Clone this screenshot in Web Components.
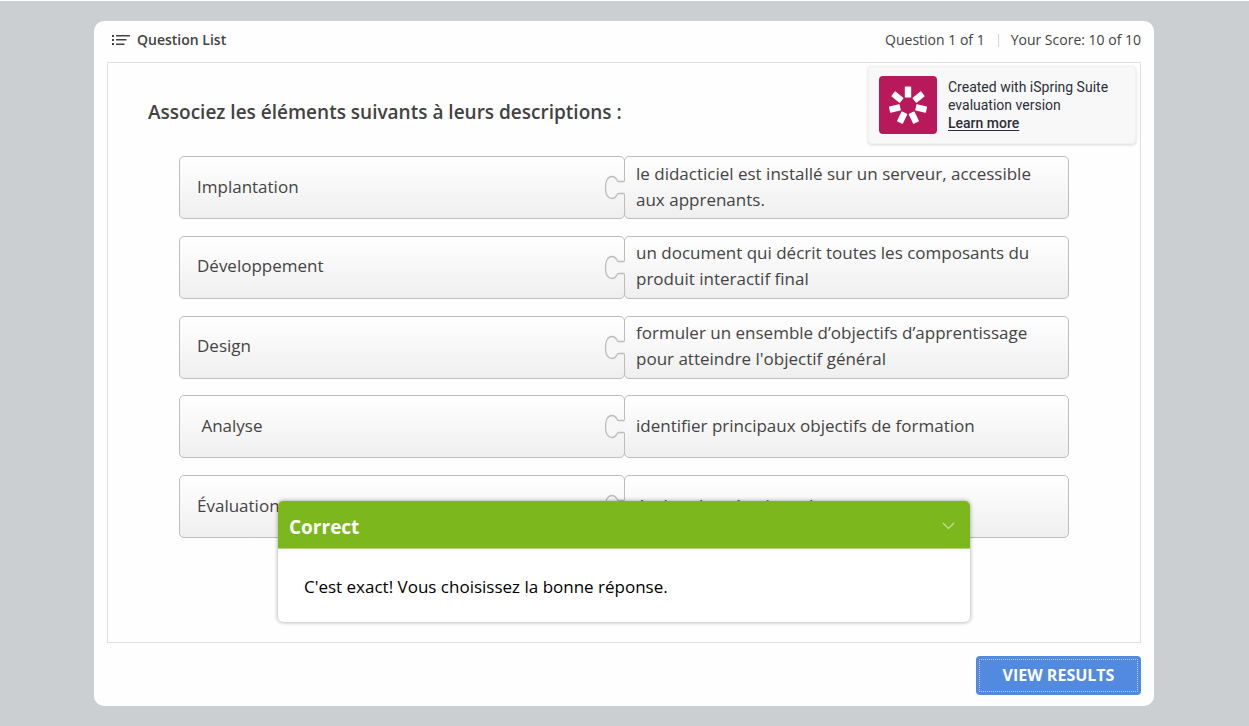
<!DOCTYPE html>
<html lang="fr">
<head>
<meta charset="utf-8">
<title>Question List</title>
<style>
html { height: 100%; }
body { margin: 0; min-height: 100%; box-sizing: border-box; display: flex; padding-right: 1px; background: #cbcfd2; border-top: 1px solid #fff; font-family: "Open Sans", "Noto Sans", sans-serif; color: #424242; }
</style>
</head>
<body>
<quiz-player></quiz-player>
<script>
const define = (name, html, setup) => {
  const template = document.createElement('template');
  template.innerHTML = html;
  customElements.define(name, class extends HTMLElement {
    constructor() {
      super();
      this.attachShadow({ mode: 'open' }).append(template.content.cloneNode(true));
      if (setup) setup(this);
    }
  });
};

define('quiz-topbar', `
<style>
:host { display: flex; align-items: center; justify-content: space-between; height: 38px; padding-left: 5px; font-size: 14px; line-height: 20px; }
button { display: flex; align-items: center; gap: 7px; padding: 0; border: 0; background: none; font: 600 14px/20px "Open Sans", sans-serif; color: #424242; }
.status { display: flex; align-items: center; }
.score { margin-left: 13px; padding-left: 13px; position: relative; }
.score::before { content: ""; position: absolute; left: 0; top: 4px; height: 13px; border-left: 1px solid #d4d4d4; }
</style>
<button type="button">
  <svg width="18" height="12" viewBox="0 0 18 12" fill="#424242"><path d="M0 1h2v2H0zM4 1h14v1.500H4zM0 5h2v2H0zM4 5h10.500v1.500H4zM0 9h2v2H0zM4 9.500h8.500V11H4z"/></svg>
  <span>Question List</span>
</button>
<div class="status"><span>Question 1 of 1</span><span class="score">Your Score: 10 of 10</span></div>
`);

define('trial-badge', `
<style>
:host { display: flex; gap: 11px; box-sizing: border-box; width: 268px; padding: 9px 10px 9px; border: 1px solid #f1f1f1; border-radius: 4px; background: #f8f8f8; box-shadow: 0 1px 3px rgba(0,0,0,.15); font: 14px/18px Roboto, sans-serif; color: #2c2f38; }
svg { flex: none; }
p { margin: 2px 0 0; white-space: nowrap; }
a { color: inherit; font-weight: 500; text-underline-offset: 2px; }
</style>
<svg width="58" height="58" viewBox="0 0 58 58"><rect width="58" height="58" rx="4" fill="#b8195b"/><g id="rays" fill="#fff" transform="translate(29 29.500)"></g></svg>
<p>Created with iSpring Suite<br>evaluation version<br><a href="#learn">Learn more</a></p>
`, host => {
  const rays = host.shadowRoot.querySelector('#rays');
  for (let i = 0; i < 7; i++) {
    const r = document.createElementNS('http://www.w3.org/2000/svg', 'rect');
    for (const [k, v] of Object.entries({ x: -3.2, y: -19, width: 6.4, height: 11, rx: 0.6, transform: `rotate(${i * 360 / 7})` })) r.setAttribute(k, v);
    rays.append(r);
  }
});

define('match-pair', `
<style>
:host { display: grid; grid-template-columns: 1fr 1fr; height: 63px; font-size: 17px; line-height: 26px; color: #444; }
div { position: relative; box-sizing: border-box; display: flex; align-items: center; border: 1px solid #bdbdbd; border-radius: 5px; background: linear-gradient(#fff, #efefef); }
.term { padding: 0 0 2px 17px; margin-right: -1px; white-space: pre; }
.answer { padding: 0 16px 2px 11px; }
svg { position: absolute; left: -21px; top: 18px; }
</style>
<div class="term"><slot name="term"></slot></div>
<div class="answer">
  <svg width="22" height="25" viewBox="0 0 22 25"><path d="M20 6v13h2V6z" fill="#f7f7f7"/><path d="M20.500 6.500H14.500C12.500 6.500 13 1.500 8 1.500C3 1.500 1.500 7 1.500 12.500S3 23.500 8 23.500C13 23.500 12.500 18.500 14.500 18.500H20.500" fill="#f7f7f7" stroke="#bdbdbd" stroke-width="1.300"/></svg>
  <slot></slot>
</div>
`);

define('feedback-popup', `
<style>
:host { display: block; border-radius: 5px; background: #fff; box-shadow: 0 0 4px rgba(0,0,0,.38); overflow: hidden; }
header { display: flex; align-items: center; justify-content: space-between; height: 47px; padding: 0 15px 0 11px; border-bottom: 1px solid #b5d77c; background: #7cb81d; color: #fff; }
h2 { margin: 4px 0 0; font-size: 19px; line-height: 26px; font-weight: 700; }
button { display: flex; margin-top: 2px; padding: 0; border: 0; background: none; }
p { margin: 0; padding: 27px 26px 24px; font-size: 17px; line-height: 22px; color: #000; }
</style>
<header><h2><slot name="title"></slot></h2>
<button type="button" aria-label="Réduire"><svg width="13" height="8" viewBox="0 0 13 8" fill="none" stroke="#c5e09a" stroke-width="1.200"><path d="M1 1l5.500 5.500L12 1"/></svg></button></header>
<p><slot></slot></p>
`);

define('quiz-player', `
<style>
:host { display: flex; flex-direction: column; flex: 1; max-width: 1060px; box-sizing: border-box; margin: 20px auto; padding: 0 13px 11px; border-radius: 10px; background: #fefefe; }
main { position: relative; flex: 1; display: flex; flex-direction: column; margin-top: 3px; padding: 34px 71px 104px; border: 1px solid #e0e0e0; }
h1 { margin: 0 0 29px -31px; font-size: 19px; line-height: 30px; font-weight: 600; }
.pairs { flex: 1; display: grid; align-content: space-between; row-gap: 12px; }
trial-badge { position: absolute; right: 4px; top: 3px; }
feedback-popup { position: absolute; left: 170px; right: 170px; bottom: 20px; }
footer { display: flex; justify-content: flex-end; margin-top: 13px; }
footer button { box-sizing: border-box; width: 165px; height: 39px; padding: 0 0 2px; border: 0; border-radius: 4px; background: #528adf; outline: 1px dotted #b5cdf2; outline-offset: -4px; color: #fff; font: 700 16px/22px "Open Sans", sans-serif; }
</style>
<quiz-topbar></quiz-topbar>
<main>
  <h1>Associez les éléments suivants à leurs descriptions :</h1>
  <trial-badge></trial-badge>
  <div class="pairs">
    <match-pair><span slot="term">Implantation</span>le didacticiel est installé sur un serveur, accessible aux apprenants.</match-pair>
    <match-pair><span slot="term">Développement</span>un document qui décrit toutes les composants du produit interactif final</match-pair>
    <match-pair><span slot="term">Design</span>formuler un ensemble d’objectifs d’apprentissage pour atteindre l'objectif général</match-pair>
    <match-pair><span slot="term"> Analyse</span>identifier principaux objectifs de formation</match-pair>
    <match-pair><span slot="term">Évaluation</span>évaluer les réactions de</match-pair>
  </div>
  <feedback-popup><span slot="title">Correct</span>C'est exact! Vous choisissez la bonne réponse.</feedback-popup>
</main>
<footer><button type="button">VIEW RESULTS</button></footer>
`);
</script>
</body>
</html>
